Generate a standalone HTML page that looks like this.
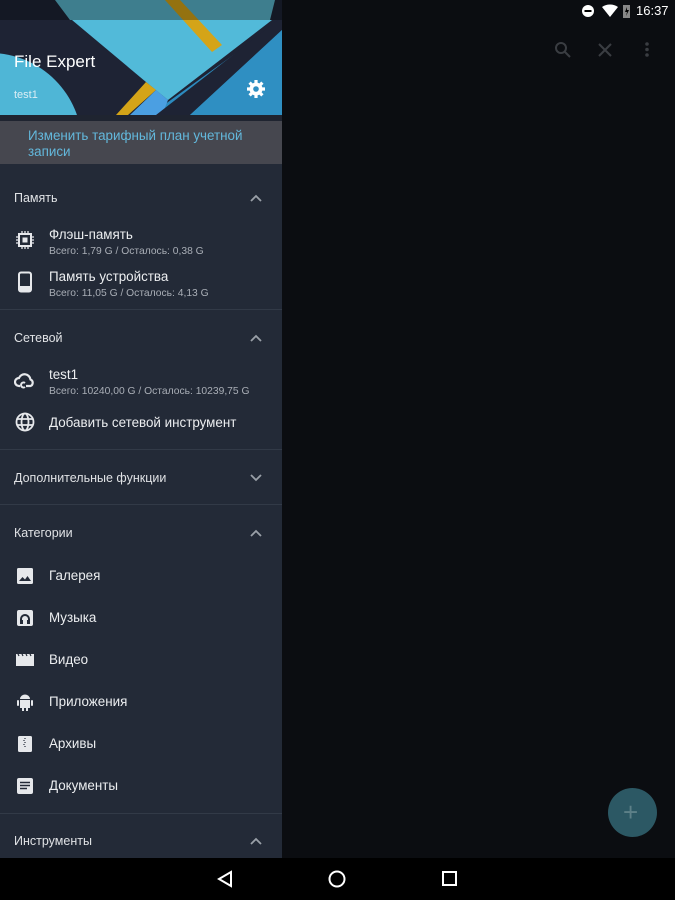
<!DOCTYPE html>
<html><head><meta charset="utf-8"><style>
*{margin:0;padding:0;box-sizing:border-box}
body{width:675px;height:900px;background:#0b0d11;font-family:"Liberation Sans","DejaVu Sans",sans-serif;position:relative;overflow:hidden;color:#e6e8eb}
.drawer{position:absolute;left:0;top:0;width:282px;height:858px;background:#232a37}
.abs{position:absolute}
.sh{position:absolute;left:14px;font-size:12.5px;color:#e0e2e5}
.chev{position:absolute;left:249px;width:14px;height:8px}
.div{position:absolute;left:0;width:282px;height:1px;background:#323a47}
.t{position:absolute;left:49px;font-size:13.4px;color:#eceef0}
.s{position:absolute;left:49px;font-size:10.3px;color:#a9aeb6}
.ic{position:absolute;left:14px;width:22px;height:22px}
</style></head><body>
<div class="drawer">
<svg class="abs" style="left:0;top:0" width="282" height="115" viewBox="0 0 282 115">
<rect width="282" height="115" fill="#2c8bbf"/>
<polygon points="60,0 282,0 282,20 150,115 0,115 0,0" fill="#1e2334"/>
<polygon points="72,20 272,20 168,100 146,82" fill="#52bad9"/>
<polygon points="55,0 275,0 270,20 70,20" fill="#5ab5cc"/>
<polygon points="165,0 180,0 222,45 212,52" fill="#d4a418"/>
<polygon points="146,82 156,90 128,115 116,115" fill="#d4a418"/>
<polygon points="156,90 168,100 162,115 130,115" fill="#4b9fe2"/>
<polygon points="278,20 282,20 282,30 190,115 156,115" fill="#1e2334"/>
<polygon points="282,30 282,115 190,115" fill="#2f8fc2"/>
<circle cx="-10" cy="145" r="92" fill="#4fb6d6"/>
<rect width="282" height="20" fill="#000" opacity="0.3"/>
<text x="14" y="67" font-size="17" fill="#fff" font-family="Liberation Sans">File Expert</text>
<text x="14" y="98" font-size="11" fill="#dceef5" font-family="Liberation Sans">test1</text>
<g transform="translate(256,89)" fill="#fff"><circle r="6.5"/><g stroke="#fff" stroke-width="3.2"><line x1="-9" y1="0" x2="9" y2="0"/><line x1="0" y1="-9" x2="0" y2="9"/><line x1="-6.4" y1="-6.4" x2="6.4" y2="6.4"/><line x1="-6.4" y1="6.4" x2="6.4" y2="-6.4"/></g><circle r="2.8" fill="#2f8fc2"/></g>
</svg>
<div class="abs" style="left:0;top:115px;width:282px;height:6px;background:#1f2430"></div>
<div class="abs" style="left:0;top:121px;width:282px;height:43px;background:#46474f"></div>
<div class="abs" style="left:28px;top:128px;font-size:13.4px;line-height:16px;color:#63b8dc;width:250px">Изменить тарифный план учетной записи</div>

<div class="sh" style="top:191px">Память</div>
<svg class="chev" style="top:194px" viewBox="0 0 14 8"><path d="M2 7L7 2L12 7" stroke="#9aa0a8" stroke-width="1.8" fill="none"/></svg>
<svg class="ic" style="top:229px" viewBox="0 0 22 22"><rect x="5" y="5" width="12" height="12" fill="none" stroke="#e6e8eb" stroke-width="2"/><rect x="8.5" y="8.5" width="5" height="5" fill="#e6e8eb"/><g stroke="#e6e8eb" stroke-width="1.3"><path d="M8 2v3M11 2v3M14 2v3M8 17v3M11 17v3M14 17v3M2 8h3M2 11h3M2 14h3M17 8h3M17 11h3M17 14h3"/></g></svg>
<div class="t" style="top:227px">Флэш-память</div>
<div class="s" style="top:246px">Всего: 1,79 G / Осталось: 0,38 G</div>
<svg class="ic" style="top:271px" viewBox="0 0 22 22"><rect x="5" y="1.5" width="12" height="19" rx="2" fill="none" stroke="#e6e8eb" stroke-width="2"/><rect x="5" y="15" width="12" height="5.5" fill="#e6e8eb"/></svg>
<div class="t" style="top:269px">Память устройства</div>
<div class="s" style="top:288px">Всего: 11,05 G / Осталось: 4,13 G</div>
<div class="div" style="top:309px"></div>

<div class="sh" style="top:331px">Сетевой</div>
<svg class="chev" style="top:334px" viewBox="0 0 14 8"><path d="M2 7L7 2L12 7" stroke="#9aa0a8" stroke-width="1.8" fill="none"/></svg>
<svg class="ic" style="top:369px" viewBox="0 0 22 22"><path d="M6 17H5a4 4 0 0 1 0-8 6 6 0 0 1 11.5 1.5A3.5 3.5 0 0 1 16.5 17H12" fill="none" stroke="#e6e8eb" stroke-width="2.2"/><path d="M11 14a2.5 2.5 0 1 0 0 4" fill="none" stroke="#e6e8eb" stroke-width="2"/></svg>
<div class="t" style="top:367px">test1</div>
<div class="s" style="top:386px">Всего: 10240,00 G / Осталось: 10239,75 G</div>
<svg class="ic" style="top:411px" viewBox="0 0 22 22"><g fill="none" stroke="#e6e8eb" stroke-width="1.8"><circle cx="11" cy="11" r="8.5"/><ellipse cx="11" cy="11" rx="3.5" ry="8.5"/><path d="M3 8h16M3 14h16"/></g></svg>
<div class="t" style="top:415px">Добавить сетевой инструмент</div>
<div class="div" style="top:449px"></div>

<div class="sh" style="top:471px">Дополнительные функции</div>
<svg class="chev" style="top:474px" viewBox="0 0 14 8"><path d="M2 1L7 6L12 1" stroke="#9aa0a8" stroke-width="1.8" fill="none"/></svg>
<div class="div" style="top:504px"></div>

<div class="sh" style="top:526px">Категории</div>
<svg class="chev" style="top:529px" viewBox="0 0 14 8"><path d="M2 7L7 2L12 7" stroke="#9aa0a8" stroke-width="1.8" fill="none"/></svg>

<svg class="ic" style="top:565px" viewBox="0 0 22 22"><rect x="3" y="3" width="16" height="16" rx="1.5" fill="#e6e8eb"/><path d="M5 16l3.5-4 2.5 2.5 2.5-3.5 3.5 5z" fill="#232a37"/></svg>
<div class="t" style="top:568px">Галерея</div>
<svg class="ic" style="top:607px" viewBox="0 0 22 22"><rect x="3" y="3" width="16" height="16" rx="2" fill="#e6e8eb"/><path d="M7 16v-4a4 4 0 0 1 8 0v4" fill="none" stroke="#232a37" stroke-width="2"/><rect x="6" y="13" width="3" height="4" fill="#232a37"/><rect x="13" y="13" width="3" height="4" fill="#232a37"/></svg>
<div class="t" style="top:610px">Музыка</div>
<svg class="ic" style="top:649px" viewBox="0 0 22 22"><path d="M2 5h18v12H2z" fill="#e6e8eb"/><path d="M4 5l1 2M8 5l1 2M12 5l1 2M16 5l1 2" stroke="#232a37" stroke-width="1.2"/></svg>
<div class="t" style="top:652px">Видео</div>
<svg class="ic" style="top:691px" viewBox="0 0 22 22"><path d="M6 8a5 4.5 0 0 1 10 0z" fill="#e6e8eb"/><rect x="6" y="9" width="10" height="8" fill="#e6e8eb"/><rect x="8" y="16" width="2" height="4" fill="#e6e8eb"/><rect x="12" y="16" width="2" height="4" fill="#e6e8eb"/><rect x="3" y="9" width="2" height="6" rx="1" fill="#e6e8eb"/><rect x="17" y="9" width="2" height="6" rx="1" fill="#e6e8eb"/></svg>
<div class="t" style="top:694px">Приложения</div>
<svg class="ic" style="top:733px" viewBox="0 0 22 22"><rect x="4" y="3" width="14" height="16" rx="1.5" fill="#e6e8eb"/><path d="M11 5v1M10 7v1M11 9v1M10 11v1M11 13v1" stroke="#232a37" stroke-width="1.2"/></svg>
<div class="t" style="top:736px">Архивы</div>
<svg class="ic" style="top:775px" viewBox="0 0 22 22"><rect x="3" y="3" width="16" height="16" rx="2" fill="#e6e8eb"/><path d="M6 7.5h10M6 10.5h10M6 13.5h7" stroke="#232a37" stroke-width="1.6"/></svg>
<div class="t" style="top:778px">Документы</div>
<div class="div" style="top:813px"></div>
<div class="sh" style="top:834px">Инструменты</div>
<svg class="chev" style="top:837px" viewBox="0 0 14 8"><path d="M2 7L7 2L12 7" stroke="#9aa0a8" stroke-width="1.8" fill="none"/></svg>
</div>

<svg class="abs" style="left:580px;top:3px" width="40" height="16"><circle cx="8" cy="8" r="6" fill="#fff"/><rect x="4.5" y="7" width="7" height="2" fill="#000"/><path d="M22 4a14 14 0 0 1 16 0l-8 10z" fill="#fff"/></svg>
<svg class="abs" style="left:622px;top:3px" width="10" height="16"><rect x="1" y="2" width="7" height="13" fill="#888"/><path d="M5 4L3 9h2l-1 4 3-6H5z" fill="#000"/></svg>
<div class="abs" style="left:636px;top:3px;font-size:13px;color:#fff">16:37</div>
<svg class="abs" style="left:553px;top:40px" width="20" height="20"><circle cx="8" cy="8" r="5" fill="none" stroke="#3a3d42" stroke-width="2"/><path d="M12 12l5 5" stroke="#3a3d42" stroke-width="2"/></svg>
<svg class="abs" style="left:597px;top:42px" width="16" height="16"><path d="M2 2l12 12M14 2L2 14" stroke="#3a3d42" stroke-width="2"/></svg>
<svg class="abs" style="left:643px;top:41px" width="8" height="18"><circle cx="4" cy="3" r="1.8" fill="#3a3d42"/><circle cx="4" cy="8.5" r="1.8" fill="#3a3d42"/><circle cx="4" cy="14" r="1.8" fill="#3a3d42"/></svg>
<div class="abs" style="left:608px;top:788px;width:49px;height:49px;border-radius:50%;background:#2c5864"></div>
<div class="abs" style="left:623px;top:797px;font-size:26px;color:#5d8088;line-height:30px">+</div>
<div class="abs" style="left:0;top:858px;width:675px;height:42px;background:#000"></div>
<svg class="abs" style="left:215px;top:869px" width="20" height="20"><path d="M16 3L4 10l12 7z" fill="none" stroke="#fff" stroke-width="2"/></svg>
<svg class="abs" style="left:327px;top:869px" width="20" height="20"><circle cx="10" cy="10" r="7.5" fill="none" stroke="#fff" stroke-width="2"/></svg>
<svg class="abs" style="left:441px;top:870px" width="18" height="18"><rect x="2" y="2" width="13" height="13" fill="none" stroke="#fff" stroke-width="2"/></svg>
</body></html>
